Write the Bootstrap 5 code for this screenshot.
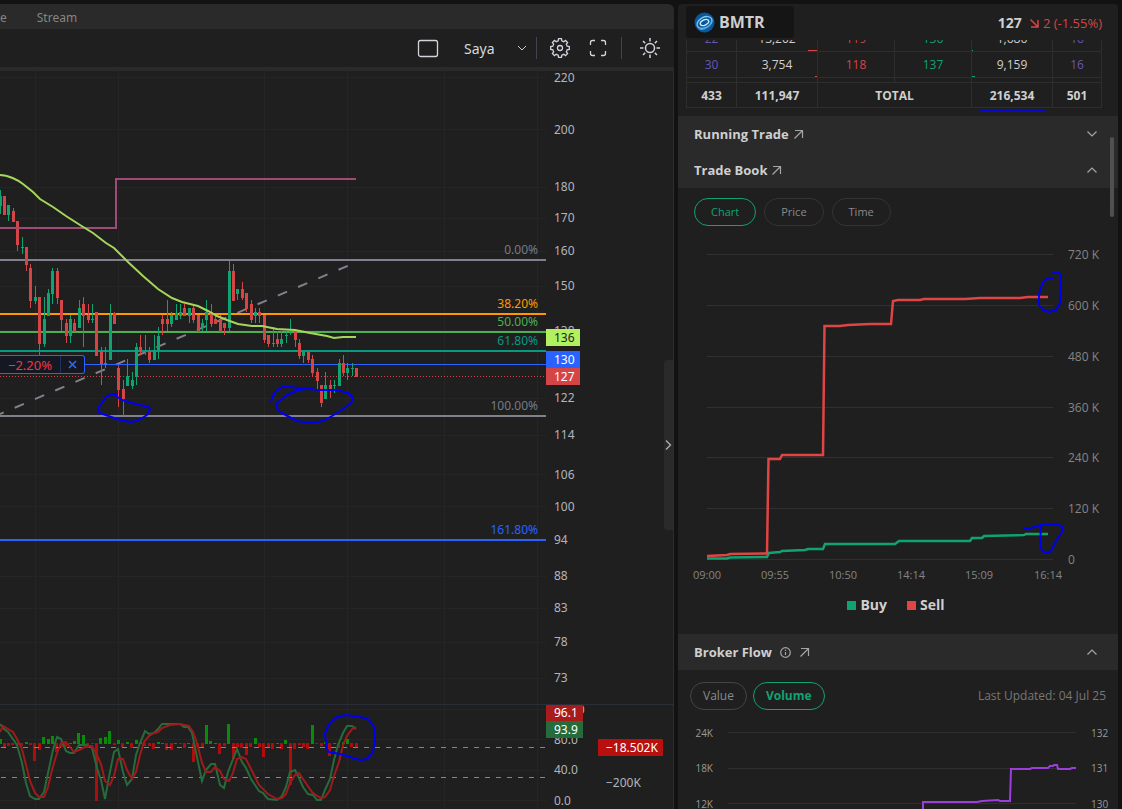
<!DOCTYPE html>
<html lang="en" data-bs-theme="dark">
<head>
<meta charset="utf-8">
<meta name="viewport" content="width=device-width, initial-scale=1">
<title>BMTR</title>
<link href="https://cdn.jsdelivr.net/npm/bootstrap@5.3.0/dist/css/bootstrap.min.css" rel="stylesheet">
<style>
:root{--pane:#1f1f1f;--bar:#2a2a2a;--line:#2e2e2e;--up:#0ea371;--down:#d64545;--ink:#0000f0}
body{background:#121212;color:#cfcfcf;font-family:"Open Sans","Noto Sans",sans-serif;font-size:12px;line-height:16px}
.pane{background:var(--pane);min-width:0}
.side{width:440px}
.chart-side{border-top-right-radius:6px}
.tabs{background:var(--bar);height:25px;gap:30px;padding-top:2px;font-family:"Noto Sans",sans-serif}
.tabs a{color:#858585}
.tools{height:42px;border-bottom:4px solid var(--bar);padding-right:12px}
.tools .btn{width:24px;height:24px}
.tools .form-select{width:64px;height:28px;font:14px "Noto Sans",sans-serif;color:#d6d8de;border:0;padding:0;background-color:transparent;background-size:10px 10px;background-position:right 1px center;background-image:url("data:image/svg+xml,%3Csvg xmlns='http://www.w3.org/2000/svg' viewBox='0 0 10 10' fill='none' stroke='%23c8cad0'%3E%3Cpath d='M1 3l4 4 4-4'/%3E%3C/svg%3E")}
.tool-pair{padding:0 11px;gap:14px}
.rule{width:1px;height:22px;background:#43434f}
.stage{border-right:1px solid #2d2d38}
.stage text,.pos-tag{font-family:"Noto Sans",sans-serif;font-size:12px}
.pos-tag{font-size:13px;top:284px;height:19px;background:#151722;border:1px solid #2962ff;border-left:0;border-radius:0 3px 3px 0;color:#f23645}
.pos-tag span{padding:0 8px}
.pos-tag button{width:24px;border-left:1px solid #20315f;color:#2962ff}
.handle{top:289px;width:9px;height:170px;background:var(--bar);border-radius:4px 0 0 4px}
.ticker{background:#151515;width:108px;height:32px;font-size:16px;border-radius:4px}
.head-row{height:36px;padding:2px 16px 0 8px}
.px-chg{font-size:13px;color:var(--down)}
.px-last{font-size:14px}
.book-clip{height:72px;padding:0 16px 4px 8px}
.book{table-layout:fixed;border-collapse:collapse;color:#cfcfcf}
.book td{position:relative;border:1px solid var(--line);height:26px;padding:0;text-align:center}
.book .slim td{height:5px;line-height:0;font-size:0}
.book .sum td{height:25px;padding-top:1px}
.lot{color:#6457b8}.bid{color:var(--down)}.ask{color:var(--up)}
.depth{position:absolute;bottom:0;height:1px}
.depth.r{right:0;background:var(--down)}
.depth.l{left:0;background:var(--up)}
.inkline{position:absolute;left:8px;right:7px;bottom:-4px;height:2px;background:#0808c8}
.sec{background:var(--bar);height:36px;padding:0 21px 0 16px;font-size:13px}
.ico{fill:none;stroke:#a5a5a5;stroke-width:1.2}
.pill{height:28px;border:1px solid #333;border-radius:14px;color:#8a8a8a;font-size:11px;line-height:16px;padding:0 16px}
.pill.md{font-size:12px;padding:0 12px;border-color:#444}
.pill.on{border-color:var(--up);color:var(--up)}
.pills-top{padding-top:10px}
.broker{padding-top:12px}
.broker-bar{padding:0 12px;gap:6px}
.side svg text{fill:#858585;font-size:12px}
.side svg .t11{font-size:11px}
.side svg .t10{font-size:10px;fill:#999}
.grid-h{stroke:#303030;fill:none}
.ink{fill:none;stroke:var(--ink);stroke-width:2;stroke-linecap:round;stroke-linejoin:round}
.legend{font-size:14px;height:26px;gap:20px;padding-right:4px}
.legend i{width:9px;height:9px;background:var(--up)}
.legend .sell i{background:#e04545}
.note{color:#777}
.scroll-thumb{width:4px;height:80px;right:4px;top:133px;border-radius:2px;background:#505050}
</style>
</head>
<body>
<div class="d-flex vh-100 overflow-hidden gap-1 pt-1 pe-1">
  <main class="pane chart-side flex-grow-1 d-flex flex-column overflow-hidden">
    <nav class="tabs d-flex align-items-center flex-shrink-0">
      <a href="#" class="text-decoration-none">e</a>
      <a href="#" class="text-decoration-none">Stream</a>
    </nav>
    <div class="tools d-flex align-items-center justify-content-end flex-shrink-0">
      <button class="btn p-0 border-0 d-flex me-4" aria-label="Layout"><svg width="24" height="24" fill="none" stroke="#d1d4dc" stroke-width="1.300"><rect x="2.500" y="4.500" width="19" height="16" rx="2"/></svg></button>
      <select class="form-select shadow-none me-2" aria-label="Saved layout"><option>Saya</option></select>
      <span class="rule"></span>
      <span class="tool-pair d-flex">
        <button class="btn p-0 border-0 d-flex" aria-label="Settings"><svg width="24" height="24" viewBox="-12 -12 24 24" fill="none" stroke="#d1d4dc" stroke-width="1.300"><path id="gear"/><circle r="2.500"/></svg></button>
        <button class="btn p-0 border-0 d-flex" aria-label="Full screen"><svg width="24" height="24" fill="none" stroke="#d1d4dc" stroke-width="1.300"><path d="M4.500 9V6.500a2 2 0 0 1 2-2H9M15 4.500h2.500a2 2 0 0 1 2 2V9M19.500 15v2.500a2 2 0 0 1-2 2H15M9 19.500H6.500a2 2 0 0 1-2-2V15"/></svg></button>
      </span>
      <span class="rule me-3"></span>
      <button class="btn p-0 border-0 d-flex" aria-label="Theme"><svg width="24" height="24" fill="none" stroke="#d1d4dc" stroke-width="1.500"><circle cx="12" cy="12" r="4.500"/><path d="M12 2v3.500M12 18.500V22M2 12h3.500M18.500 12H22M5 5l2.200 2.200M16.800 16.800L19 19M5 19l2.200-2.200M16.800 7.200L19 5"/></svg></button>
    </div>
    <div class="stage position-relative flex-grow-1 overflow-hidden">
      <svg class="d-block w-100 h-100" viewBox="0 71 673 738" preserveAspectRatio="xMaxYMin slice">
        <g stroke="#252525" fill="none"><path d="M35.500 71V809M118.500 71V809M264.500 71V809M347.500 71V809M444.500 71V809M537.500 71V809"/><path d="M0 77.500H546M0 129.500H546M0 187.500H546M0 218.500H546M0 251.500H546M0 286.500H546M0 330.500H546M0 398.500H546M0 435.500H546M0 474.500H546M0 506.500H546M0 576.500H546M0 608.500H546M0 642.500H546M0 678.500H546M0 709.500H546M0 739.500H546M0 770.500H546M0 800.500H546"/></g>
        <path d="M0 704.500H673" stroke="#2a2e39"/>
        <g fill="none" stroke-width="2">
          <path d="M0 414L352 264" stroke="#82808c" stroke-dasharray="10 12" stroke-dashoffset="6"/>
          <path d="M0 260H546M0 416H546" stroke="#82808f"/>
          <path d="M0 314H546" stroke="#ff9800"/>
          <path d="M0 332H546" stroke="#4caf50"/>
          <path d="M0 351H546" stroke="#089981"/>
          <path d="M0 540H546" stroke="#2962ff"/>
          <path d="M0 364.500H546" stroke="#2962ff" stroke-width="1"/>
          <path d="M0 376.500H546" stroke="#d64545" stroke-width="1" stroke-dasharray="1 2"/>
        </g>
        <g id="candles" shape-rendering="crispEdges"></g>
        <path d="M0 228H116V179H356" fill="none" stroke="#a04a78" stroke-width="2"/>
        <path d="M0 175C8 175 18 180 23 184L33 192 40 199 53 207 66 216 80 225 93 233 106 243 114 248 128 262 143 276 158 289 172 298 182 302 198 306 208 311 217 316 227 320 238 324 252 326 262 326 277 329 295 330 310 333 327 336 334 338 343 337 356 337" fill="none" stroke="#a5d65a" stroke-width="2"/>
        <g text-anchor="end">
          <text x="538" y="254" fill="#787b86">0.00%</text><text x="538" y="308" fill="#ff9800">38.20%</text>
          <text x="538" y="326" fill="#4caf50">50.00%</text><text x="538" y="345" fill="#089981">61.80%</text>
          <text x="538" y="410" fill="#787b86">100.00%</text><text x="538" y="534" fill="#2962ff">161.80%</text>
        </g>
        <g fill="#b2b5be">
          <text x="554" y="82">220</text><text x="554" y="134">200</text><text x="554" y="191">180</text><text x="554" y="222">170</text>
          <text x="554" y="255">160</text><text x="554" y="290">150</text><text x="554" y="335">138</text><text x="554" y="402">122</text>
          <text x="554" y="439">114</text><text x="554" y="479">106</text><text x="554" y="511">100</text><text x="554" y="544">94</text>
          <text x="554" y="580">88</text><text x="554" y="612">83</text><text x="554" y="646">78</text><text x="554" y="682">73</text>
          <text x="554" y="714">120.0</text><text x="554" y="744">80.0</text><text x="554" y="774">40.0</text><text x="554" y="805">0.0</text>
          <text x="606" y="787">−200K</text>
        </g>
        <path d="M546 329h34v17h-34z" fill="#b2f060"/><path d="M546 351h34v17h-34z" fill="#2962ff"/><path d="M546 368h34v17h-34z" fill="#d64545"/>
        <text x="554" y="342" fill="#222">136</text>
        <g fill="#fff"><text x="554" y="364">130</text><text x="554" y="381">127</text></g>
        <g id="volume" shape-rendering="crispEdges"></g>
        <path d="M1 747.500H546M1 777.500H546" stroke="#858590" stroke-dasharray="5 6"/>
        <g fill="none" stroke-width="2">
          <polyline stroke="#256b3c" points="0,724 4,729 8,732 17,745 22,763 26,783 30,796 35,799 39,799 44,792 48,773 53,750 57,737 61,739 66,751 70,753 74,753 79,745 87,745 92,748 97,768 101,780 105,799 109,777 114,752 118,749 123,772 127,785 132,779 136,755 140,743 145,731 149,734 154,733 158,729 162,724 180,724 184,727 188,727 192,733 197,757 202,781 206,770 211,764 215,764 220,785 224,788 228,772 237,749 242,762 246,768 251,779 259,791 263,793 268,799 277,800 282,796 286,787 290,772 295,770 299,778 303,787 308,794 313,795 317,800 321,800 325,790 330,779 334,760 338,745 343,733 347,726 352,726 356,729"/>
          <polyline stroke="#9f1b1b" points="0,732 3,726 8,729 13,732 17,739 22,749 26,765 30,781 35,793 39,797 44,797 48,787 52,770 57,753 61,743 66,742 70,747 74,752 79,750 87,746 92,746 97,755 101,764 105,781 110,785 114,776 118,759 123,759 127,770 132,779 136,772 140,755 144,742 149,736 154,733 158,732 162,728 170,725 180,724 189,726 193,732 197,743 202,763 206,772 211,772 215,767 220,771 224,779 229,781 233,773 237,759 242,757 246,759 250,767 259,785 268,794 277,799 282,798 286,794 290,783 295,775 299,773 303,779 312,792 317,796 321,798 325,797 330,790 334,776 339,762 343,745 347,736 352,729 356,727"/>
        </g>
        <path d="M546 705h37v16h-37z" fill="#a91b1b"/><path d="M546 721h37v17h-37z" fill="#256b3c"/><rect x="598" y="739" width="65" height="17" rx="1" fill="#b80f0f"/>
        <g fill="#fff"><text x="554" y="717">96.1</text><text x="554" y="734">93.9</text><text x="606" y="752">−18.502K</text></g>
        <g class="ink">
          <path d="M117 394L112 394 106 397 99 407 98 411 100 413 117 419 130 422 137 421 147 415 150 409 149 407 140 405 132 403 122 400 113 394"/>
          <path d="M271 401L275 392 282 387 290 387 307 389 320 390 337 390 348 393 353 398 351 403 343 409 332 416 323 421 310 423 297 421 280 412 276 407 277 403 287 395 298 390 313 388"/>
          <path d="M326 743L325 733 330 723 337 717 346 715 360 717 368 719 374 727 375 740 373 752 367 759 360 760 350 757 340 754 329 752 327 749z"/>
        </g>
      </svg>
      <div class="pos-tag position-absolute start-0 d-flex align-items-center"><span>−2.20%</span><button class="btn p-0 border-top-0 border-bottom-0 border-end-0 rounded-0 h-100 d-flex align-items-center justify-content-center" aria-label="Close"><svg width="9" height="9" stroke="#2f6bff" stroke-width="1.500"><path d="M1 1l7 7M8 1l-7 7"/></svg></button></div>
      <button class="handle btn p-0 border-0 position-absolute end-0 d-flex align-items-center justify-content-center" aria-label="Collapse"><svg width="7" height="10" fill="none" stroke="#b0b0b0" stroke-width="1.300"><path d="M1 .5L5.500 5 1 9.500"/></svg></button>
    </div>
  </main>

  <aside class="pane side rounded-top-1 flex-shrink-0 position-relative overflow-hidden">
    <header class="head-row d-flex align-items-start justify-content-between">
      <div class="ticker d-flex align-items-center gap-1 fw-bold ps-2">
        <svg width="21" height="21" viewBox="0 0 21 21"><circle cx="10.500" cy="10.500" r="10" fill="#0b579c"/><g fill="none" stroke="#7cc8ee" stroke-width="1.400" transform="rotate(-28 10.500 10.500)"><ellipse cx="10.500" cy="10.500" rx="8" ry="5.200"/><ellipse cx="10.500" cy="10.500" rx="4.500" ry="2.600" stroke="#c8ecff"/><path d="M3 14c4 3.500 11 2.500 14-1" stroke="#3fa5de"/></g></svg>
        <span>BMTR</span>
      </div>
      <div class="d-flex align-items-center gap-2 h-100">
        <span class="px-last fw-bold">127</span>
        <span class="px-chg d-flex align-items-center gap-1"><svg width="9" height="9" fill="none" stroke="#d64545" stroke-width="1.500"><path d="M.5 .5l7 7M8 1v7H1"/></svg>2 (-1.55%)</span>
      </div>
    </header>
    <div class="book-clip d-flex flex-column justify-content-end overflow-hidden mb-1">
      <table class="book flex-shrink-0">
        <colgroup><col style="width:50px"><col style="width:81px"><col style="width:77px"><col style="width:77px"><col style="width:81px"><col style="width:49px"></colgroup>
        <tbody>
        <tr><td class="lot">22</td><td>13,202<i class="depth r" style="width:9px"></i></td><td class="bid">119</td><td class="ask">136</td><td>1,686<i class="depth l" style="width:1px"></i></td><td class="lot">16</td></tr>
        <tr><td class="lot">30</td><td>3,754<i class="depth r" style="width:2px"></i></td><td class="bid">118</td><td class="ask">137</td><td>9,159<i class="depth l" style="width:3px"></i></td><td class="lot">16</td></tr>
        <tr class="slim"><td></td><td></td><td></td><td></td><td></td><td></td></tr>
        <tr class="sum fw-bold"><td>433</td><td>111,947</td><td colspan="2">TOTAL</td><td>216,534<i class="inkline"></i></td><td>501</td></tr>
        </tbody>
      </table>
    </div>
    <div class="sec d-flex align-items-center justify-content-between">
      <span class="fw-bold d-flex align-items-center gap-1">Running Trade <svg class="ico" width="11" height="11"><path d="M1.500 9.500L9.500 1.500M2 1.500h7.500V9"/></svg></span>
      <svg class="ico" width="10" height="10"><path d="M.5 2.500L5 7l4.500-4.500"/></svg>
    </div>
    <div class="sec d-flex align-items-center justify-content-between">
      <span class="fw-bold d-flex align-items-center gap-1">Trade Book <svg class="ico" width="11" height="11"><path d="M1.500 9.500L9.500 1.500M2 1.500h7.500V9"/></svg></span>
      <svg class="ico" width="10" height="10"><path d="M.5 7.500L5 3l4.500 4.500"/></svg>
    </div>
    <section class="pb-3">
      <div class="d-flex gap-2 px-3 pills-top">
        <button class="btn pill on">Chart</button><button class="btn pill">Price</button><button class="btn pill">Time</button>
      </div>
      <svg class="d-block w-100" viewBox="678 226 440 366">
        <path class="grid-h" d="M707 254.500H1053M707 305.500H1053M707 356.500H1053M707 407.500H1053M707 457.500H1053M707 508.500H1053M707 559.500H1053"/>
        <text x="1068" y="259">720 K</text><text x="1068" y="310">600 K</text><text x="1068" y="361">480 K</text><text x="1068" y="412">360 K</text><text x="1068" y="462">240 K</text><text x="1068" y="513">120 K</text><text x="1068" y="564">0</text>
        <g text-anchor="middle"><text class="t11" x="707" y="579">09:00</text><text class="t11" x="775" y="579">09:55</text><text class="t11" x="843" y="579">10:50</text><text class="t11" x="911" y="579">14:14</text><text class="t11" x="979" y="579">15:09</text><text class="t11" x="1048" y="579">16:14</text></g>
        <g fill="none" stroke-width="2">
          <polyline stroke="#0ea371" stroke-width="2.500" points="707,558.500 727,558.500 730,557.500 767,557 769,553 780,552 782,551 805,550 808,549 823,549 825,544 895,544 899,541 970,541 972,538 982,538 984,536 1024,535 1026,534 1048,534"/>
          <polyline stroke="#e04545" stroke-width="2.500" points="707,556 727,555 730,554 767,553.500 768.500,459 780,459 782,455 823,455 824.500,326 840,326 848,325 870,324 891,324 893,301 898,300 920,300 924,299 965,299 980,298 1020,298 1028,297 1048,297"/>
        </g>
        <g class="ink"><path d="M1053 278L1048 278 1043 282 1040 290 1039 295 1039 305 1043 310 1049 312 1056 310 1060 303 1061 290 1061 275 1059 273 1053 273"/><path d="M1024 529L1031 528 1041 525 1058 524 1062 527 1062 532 1056 541 1051 551 1047 553 1042 551 1040 545 1041 526"/></g>
      </svg>
      <div class="legend d-flex justify-content-center align-items-center fw-bold">
        <span class="d-flex align-items-center gap-1"><i></i>Buy</span>
        <span class="sell d-flex align-items-center gap-1"><i></i>Sell</span>
      </div>
    </section>
    <div class="sec d-flex align-items-center justify-content-between">
      <span class="fw-bold d-flex align-items-center gap-2">Broker Flow
        <svg class="ico" width="11" height="11"><circle cx="5.500" cy="5.500" r="4.800"/><path d="M5.500 5v3M5.500 2.800v1.200"/></svg>
        <svg class="ico" width="11" height="11"><path d="M1.500 9.500L9.500 1.500M2 1.500h7.500V9"/></svg></span>
      <svg class="ico" width="10" height="10"><path d="M.5 7.500L5 3l4.500 4.500"/></svg>
    </div>
    <section class="broker">
      <div class="broker-bar d-flex align-items-center">
        <button class="btn pill md">Value</button><button class="btn pill md on fw-bold">Volume</button>
        <span class="note ms-auto">Last Updated: 04 Jul 25</span>
      </div>
      <svg class="d-block w-100" viewBox="678 710 440 120">
        <path class="grid-h" d="M728 732.500H1076M728 768.500H1076M728 803.500H1076"/>
        <g text-anchor="end"><text class="t10" x="713" y="737">24K</text><text class="t10" x="713" y="772">18K</text><text class="t10" x="713" y="808">12K</text></g>
        <text class="t10" x="1091" y="737">132</text><text class="t10" x="1091" y="772">131</text><text class="t10" x="1091" y="808">130</text>
        <polyline fill="none" stroke="#9b3fdc" stroke-width="2" points="923,830 923,802 977,802 982,801 998,800 1000,801 1010,801 1011,769 1030,769 1032,768 1048,768 1050,766 1053,766 1054,765 1057,765 1058,769 1070,769 1072,768 1076,768"/>
      </svg>
    </section>
    <div class="scroll-thumb position-absolute"></div>
  </aside>
</div>
<script src="https://cdn.jsdelivr.net/npm/bootstrap@5.3.0/dist/js/bootstrap.bundle.min.js"></script>
<script>
// x, high, low, body top, body bottom, 1 = rising
const candles = [[0,190,214,196,206,1],[4,196,215,196,215,0],[8,205,221,205,215,1],[13,208,222,211,222,0],[17,221,251,221,245,0],[22,237,254,247,248,1],[26,247,271,247,265,0],[30,264,308,268,301,0],[35,286,304,297,301,1],[39,297,355,297,344,0],[44,297,347,319,344,1],[48,289,316,293,316,1],[52,268,304,271,294,1],[57,268,304,271,298,0],[61,300,331,300,320,0],[66,319,343,323,336,0],[70,315,343,319,336,1],[74,319,332,323,332,0],[79,300,328,308,328,1],[83,297,347,304,316,0],[88,304,323,315,320,0],[92,304,323,319,320,1],[96,312,356,312,356,0],[101,347,385,351,364,0],[105,347,368,363,364,1],[110,304,360,315,360,1],[114,312,324,313,324,0],[118,365,407,368,390,0],[123,380,416,389,399,0],[127,359,386,376,386,1],[132,372,389,380,386,1],[136,343,385,347,377,1],[140,335,355,347,352,0],[145,335,355,351,352,0],[149,347,363,351,360,0],[154,335,360,350,360,1],[158,327,359,336,350,1],[162,315,335,319,324,0],[167,300,331,319,324,0],[171,312,327,315,324,1],[176,304,320,313,320,1],[180,304,319,312,316,1],[184,304,316,308,316,0],[189,308,323,308,316,1],[193,304,323,308,320,0],[198,315,332,315,332,0],[202,319,331,323,328,1],[206,300,331,312,320,1],[211,304,327,312,324,0],[215,316,324,319,324,0],[220,315,332,319,332,0],[224,323,335,323,328,0],[229,261,331,271,328,1],[233,264,301,271,301,0],[237,289,300,289,294,1],[242,282,300,289,298,0],[246,293,312,293,309,0],[251,300,323,304,320,0],[255,308,323,312,316,1],[259,308,323,312,316,0],[264,315,343,315,340,0],[268,335,347,335,344,0],[273,327,347,343,344,1],[277,331,347,339,344,0],[281,331,347,339,344,1],[286,331,343,335,336,1],[290,319,335,331,332,1],[295,331,347,331,340,0],[299,339,359,343,356,0],[303,351,363,351,356,1],[308,351,363,351,360,0],[312,355,376,359,373,0],[317,368,389,372,381,0],[321,385,407,385,403,0],[325,372,399,385,399,1],[330,380,398,385,390,0],[334,380,393,385,386,1],[339,359,386,363,386,1],[343,355,376,363,373,0],[347,363,380,368,373,1],[352,363,376,368,369,1],[356,368,377,368,377,0]];
document.getElementById('candles').innerHTML = candles.map(([x,h,l,t,b,up]) =>
  `<path fill="${up ? '#0ea371' : '#d64545'}" d="M${x} ${h}h1V${l}h-1zM${x-1} ${t}h3V${b}h-3z"/>`).join('');
// x and bar length: positive bars rise from the base line, negative bars hang
const volume = [[0,5],[4,-4],[8,-3],[12,-2],[17,-2],[21,-3],[26,2],[30,-2],[34,-18],[39,-7],[43,7],[48,5],[52,8],[56,-9],[61,-4],[65,-4],[70,1],[74,3],[78,11],[83,9],[87,-5],[92,-1],[96,-58],[100,6],[105,7],[109,13],[114,-2],[118,4],[122,-4],[127,2],[131,-5],[136,4],[140,2],[144,-3],[149,-3],[153,-6],[158,2],[162,1],[166,-7],[171,-7],[175,1],[180,-1],[184,-5],[188,1],[193,-19],[197,-4],[202,-4],[206,19],[210,3],[215,1],[219,-11],[224,-3],[228,20],[233,-16],[237,-4],[241,-5],[246,-12],[250,-4],[255,6],[259,-4],[263,-14],[268,-4],[272,-6],[277,1],[281,-6],[285,4],[290,-42],[294,-6],[299,-2],[303,-4],[307,-6],[312,19],[316,-1],[321,-3],[325,2],[329,-13],[334,1],[338,-5],[343,2],[347,5],[351,-4],[356,-4]];
document.getElementById('volume').innerHTML = volume.map(([x,v]) =>
  `<path fill="${v > 0 ? '#0a8a0a' : '#ad0d0d'}" d="M${x-1} ${v > 0 ? 744-v : 743}h3v${Math.abs(v)}h-3z"/>`).join('');
// eight-toothed gear outline
let gear = '';
for (let i = 0; i < 8; i++) {
  [[-14,7.4],[-9,9.4],[9,9.4],[14,7.4]].forEach(([a,r]) => {
    const t = (i * 45 + a) * Math.PI / 180;
    gear += `${gear ? 'L' : 'M'}${(r * Math.cos(t)).toFixed(2)} ${(r * Math.sin(t)).toFixed(2)}`;
  });
}
document.getElementById('gear').setAttribute('d', gear + 'z');
</script>
</body>
</html>
